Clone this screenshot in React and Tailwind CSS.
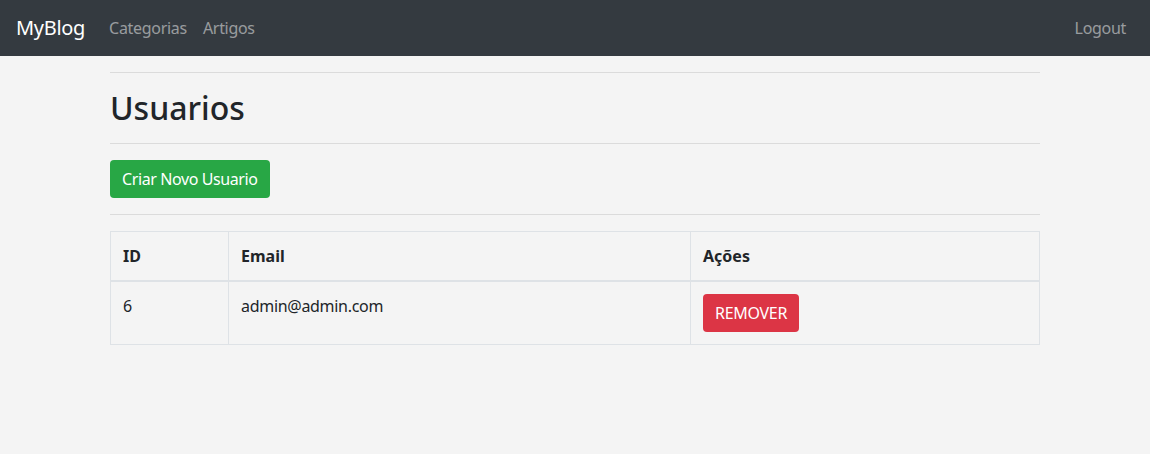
import React from 'react';

const users = [{ id: 6, email: 'admin@admin.com' }];

export default function App() {
  return (
    <div className="min-h-[454px] bg-[#f4f4f4] text-[#212529] text-base leading-6" style={{ fontFamily: '"Noto Sans", "Open Sans", sans-serif' }}>
      {/* Navbar */}
      <nav className="h-14 bg-[#343a40] flex items-center px-4">
        <a className="text-white text-xl tracking-[-0.3px] mr-4" href="#">MyBlog</a>
        <div className="flex text-[rgba(255,255,255,0.5)] tracking-[-0.3px]">
          <a className="px-2" href="#">Categorias</a>
          <a className="px-2" href="#">Artigos</a>
        </div>
        <a className="ml-auto px-2 text-[rgba(255,255,255,0.5)] tracking-[-0.3px]" href="#">Logout</a>
      </nav>

      <div className="w-[930px] mx-auto">
        <hr className="mt-4 mb-4 border-t border-[rgba(0,0,0,0.1)]" />
        <h1 className="text-[32px] leading-[1.2] font-medium">Usuarios</h1>
        <hr className="mt-4 mb-4 border-t border-[rgba(0,0,0,0.1)]" />
        <button className="h-[38px] px-3 rounded bg-[#28a745] text-white tracking-[-0.4px]">Criar Novo Usuario</button>
        <hr className="mt-4 mb-4 border-t border-[rgba(0,0,0,0.1)]" />

        <table className="w-full border-collapse border border-[#dee2e6]">
          <thead>
            <tr>
              <th className="w-[118px] text-left font-bold p-3 border border-[#dee2e6] border-b-2">ID</th>
              <th className="w-[462px] text-left font-bold p-3 border border-[#dee2e6] border-b-2">Email</th>
              <th className="text-left font-bold p-3 border border-[#dee2e6] border-b-2">Ações</th>
            </tr>
          </thead>
          <tbody>
            {users.map((u) => (
              <tr key={u.id}>
                <td className="p-3 align-top border border-[#dee2e6]">{u.id}</td>
                <td className="p-3 align-top border border-[#dee2e6] tracking-[-0.3px]">{u.email}</td>
                <td className="p-3 align-top border border-[#dee2e6]">
                  <button className="h-[38px] px-3 rounded bg-[#dc3545] text-white tracking-[-0.3px]">REMOVER</button>
                </td>
              </tr>
            ))}
          </tbody>
        </table>
      </div>
    </div>
  );
}
